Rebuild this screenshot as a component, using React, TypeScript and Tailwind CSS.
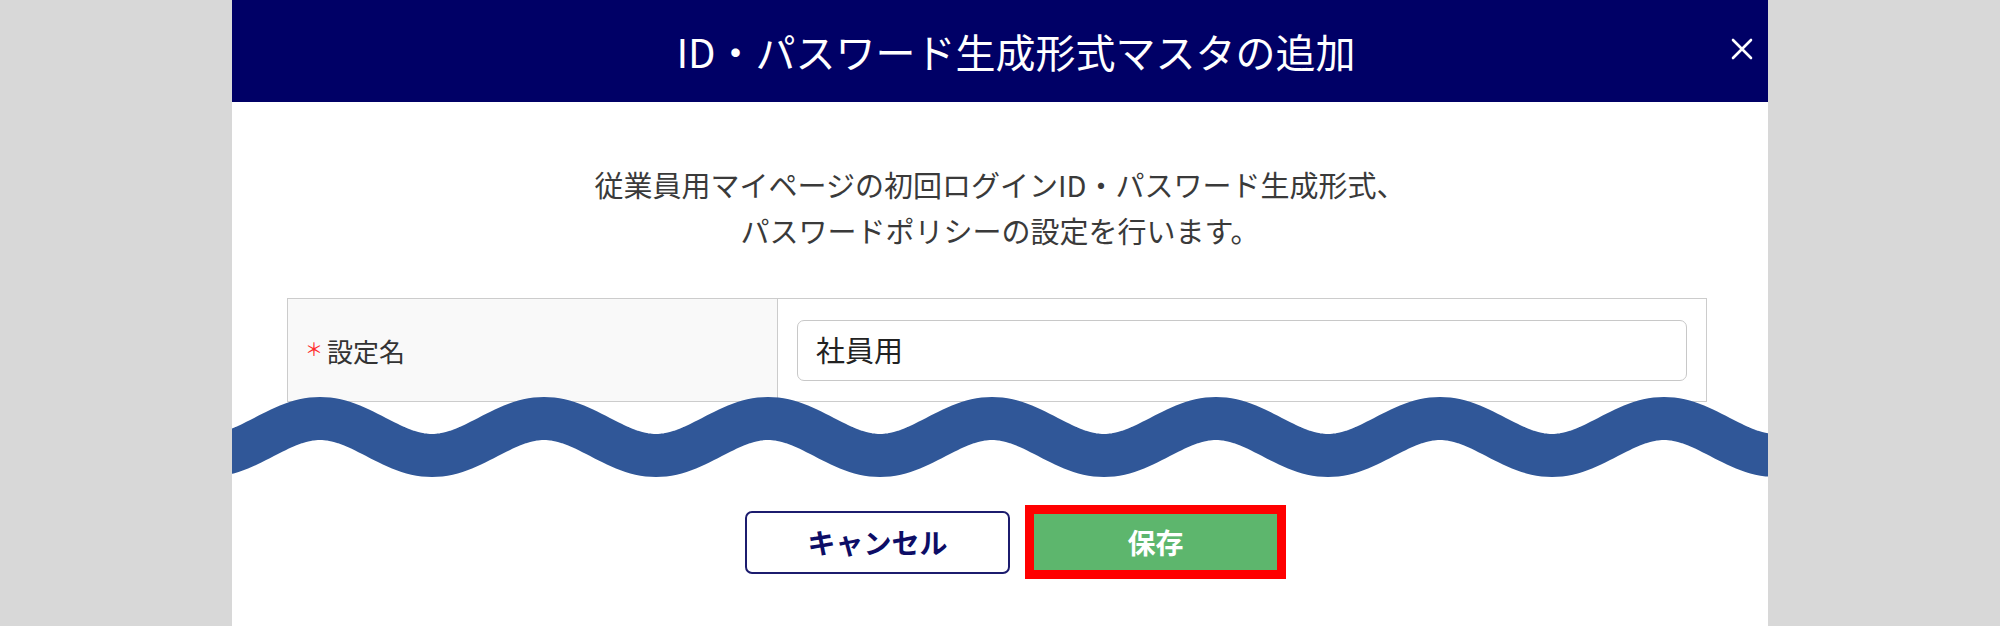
import { useMemo } from "react";

const WAVE_PERIOD = 224;
const WAVE_FIRST_CREST = 88;

function Wave() {
  // 画面省略を表す波線
  const d = useMemo(() => {
    const pts: string[] = [];
    for (let x = -120; x <= 1660; x += 4) {
      const y = 40 - 18.5 * Math.cos(((x - WAVE_FIRST_CREST) / WAVE_PERIOD) * Math.PI * 2);
      pts.push(`${x === -120 ? "M" : "L"}${x},${y.toFixed(2)}`);
    }
    return pts.join(" ");
  }, []);

  return (
    <svg width="1536" height="80" viewBox="0 0 1536 80" className="block">
      <path d={d} fill="none" stroke="#305798" strokeWidth="43" />
    </svg>
  );
}

export default function App() {
  return (
    <div className="h-[626px] w-full overflow-hidden bg-[#d8d8d8] font-['Noto_Sans_CJK_JP','Noto_Sans',sans-serif]">
      <div className="mx-auto flex h-full w-[1536px] flex-col bg-white">
        <header className="relative flex h-[102px] items-center justify-center bg-[#000066] pl-[32px]">
          <h1 className="text-[40px] leading-none font-normal text-white">ID・パスワード生成形式マスタの追加</h1>
          <button type="button" className="absolute right-[15px] top-[38px] h-[22px] w-[22px]" aria-label="閉じる">
            <svg width="22" height="22" viewBox="0 0 22 22">
              <path d="M2 2L20 20M20 2L2 20" stroke="#ffffff" strokeWidth="2.6" strokeLinecap="round" />
            </svg>
          </button>
        </header>

        <p className="pt-[59px] text-center text-[29px] leading-[46px] text-[#3a3a3a]">
          従業員用マイページの初回ログインID・パスワード生成形式、
          <br />
          パスワードポリシーの設定を行います。
        </p>

        <div className="ml-[55px] mt-[45px] grid w-[1420px] grid-cols-[489px_1fr] border border-[#cccccc]">
          <div className="flex h-[102px] items-center bg-[#f9f9f9] pl-[17px] text-[26px] text-[#333333]">
            <span className="mr-[4px] inline-block w-[18px] -translate-y-[2px] text-center text-[18px] leading-none text-[#ff2a2a]">＊</span>
            <span>設定名</span>
          </div>
          <div className="flex items-center border-l border-[#cccccc] px-[19px]">
            <div className="flex h-[61px] w-full items-center rounded-[7px] border border-[#c8c8c8] bg-white pl-[18px] text-[29px] text-[#222222]">
              社員用
            </div>
          </div>
        </div>

        <div className="-mt-[5px] h-[80px] overflow-hidden">
          <Wave />
        </div>

        <div className="mt-[28px] flex items-center justify-center pl-[31px]">
          <button
            type="button"
            className="flex h-[63px] w-[265px] items-center justify-center rounded-[7px] border-2 border-[#1c1c6e] bg-white text-[28px] font-bold text-[#0d0d66]"
          >
            キャンセル
          </button>
          <button
            type="button"
            className="ml-[15px] flex h-[74px] w-[261px] items-center justify-center border-[9px] border-[#ff0000] bg-[#5db66d] text-[28px] font-bold text-white"
          >
            保存
          </button>
        </div>
      </div>
    </div>
  );
}
